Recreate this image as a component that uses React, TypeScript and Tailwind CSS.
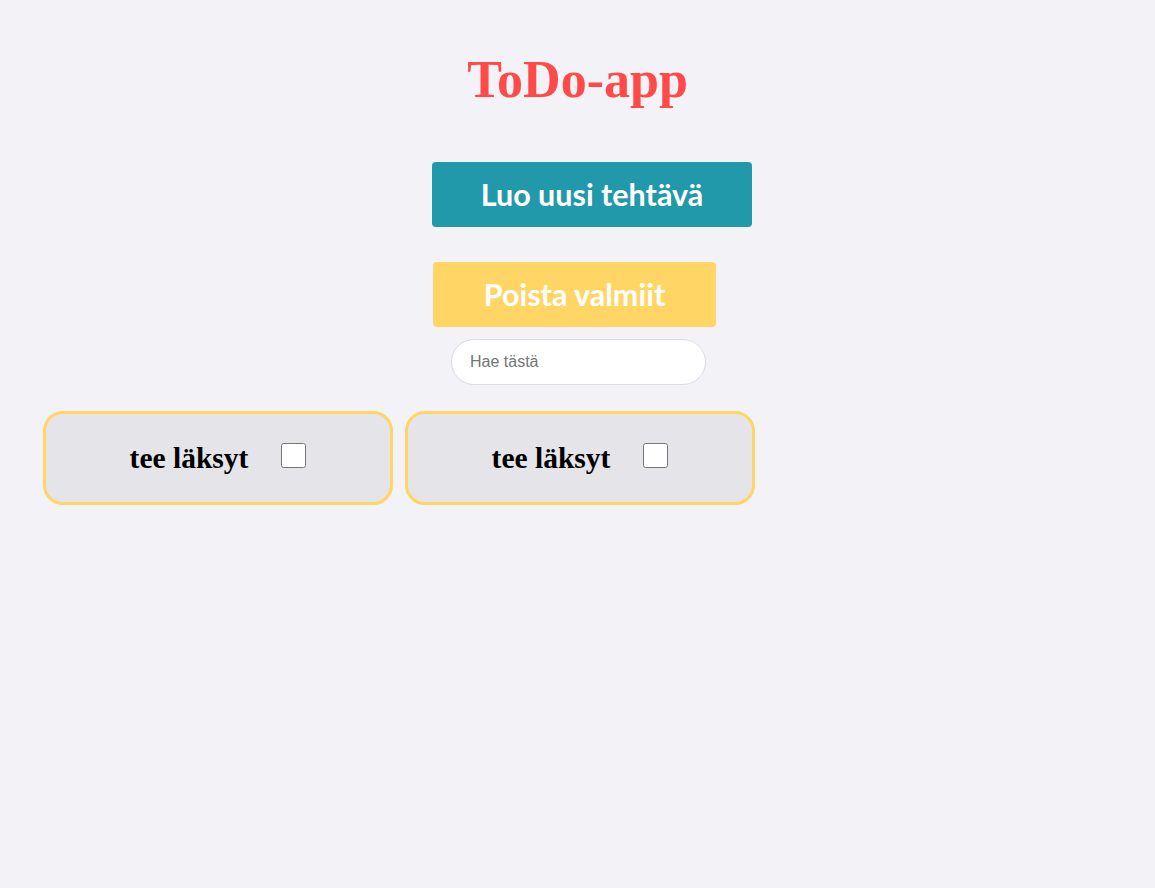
import React, { useState } from "react";

type Task = {
  id: number;
  text: string;
  done: boolean;
};

const initialTasks: Task[] = [
  { id: 1, text: "tee läksyt", done: false },
  { id: 2, text: "tee läksyt", done: false },
];

export default function App() {
  const [tasks, setTasks] = useState<Task[]>(initialTasks);
  const [search, setSearch] = useState("");

  const toggle = (id: number) =>
    setTasks(tasks.map((t) => (t.id === id ? { ...t, done: !t.done } : t)));

  const shown = tasks.filter((t) =>
    t.text.toLowerCase().includes(search.toLowerCase())
  );

  return (
    <div className="min-h-[888px] bg-[#f3f2f7]">
      <div className="flex flex-col items-center pt-[47px]">
        <h1 className="text-[52px] leading-[66px] font-bold text-[#ff4a4a] font-['Liberation_Serif',serif]">
          ToDo-app
        </h1>
        <button className="mt-[49px] ml-[29px] w-[320px] h-[65px] rounded-[4px] bg-[#2199aa] text-white text-[30.5px] font-bold font-['Lato',sans-serif]">
          Luo uusi tehtävä
        </button>
        <button className="mt-[35px] mr-[6px] w-[283px] h-[65px] rounded-[4px] bg-[#ffd665] text-white text-[30.5px] font-bold font-['Lato',sans-serif]">
          Poista valmiit
        </button>
        <input
          value={search}
          onChange={(e) => setSearch(e.target.value)}
          placeholder="Hae tästä"
          className="mt-[12px] ml-[2px] w-[255px] h-[46px] rounded-full border border-[#dcdce0] bg-white pl-[18px] text-[16px] font-['Liberation_Sans',sans-serif] placeholder:text-[#757575] outline-none"
        />
      </div>
      <div className="flex flex-wrap gap-[12px] pl-[43px] mt-[26px]">
        {shown.map((t) => (
          <div
            key={t.id}
            className="w-[350px] h-[94px] rounded-[20px] border-[3px] border-[#ffd665] bg-[#e5e4e9] flex items-center justify-center gap-[33px]"
          >
            <span className="text-[29.5px] font-bold text-black font-['Liberation_Serif',serif]">
              {t.text}
            </span>
            <input
              type="checkbox"
              checked={t.done}
              onChange={() => toggle(t.id)}
              className="w-[25px] h-[25px] m-0 -mt-[5px]"
            />
          </div>
        ))}
      </div>
    </div>
  );
}
